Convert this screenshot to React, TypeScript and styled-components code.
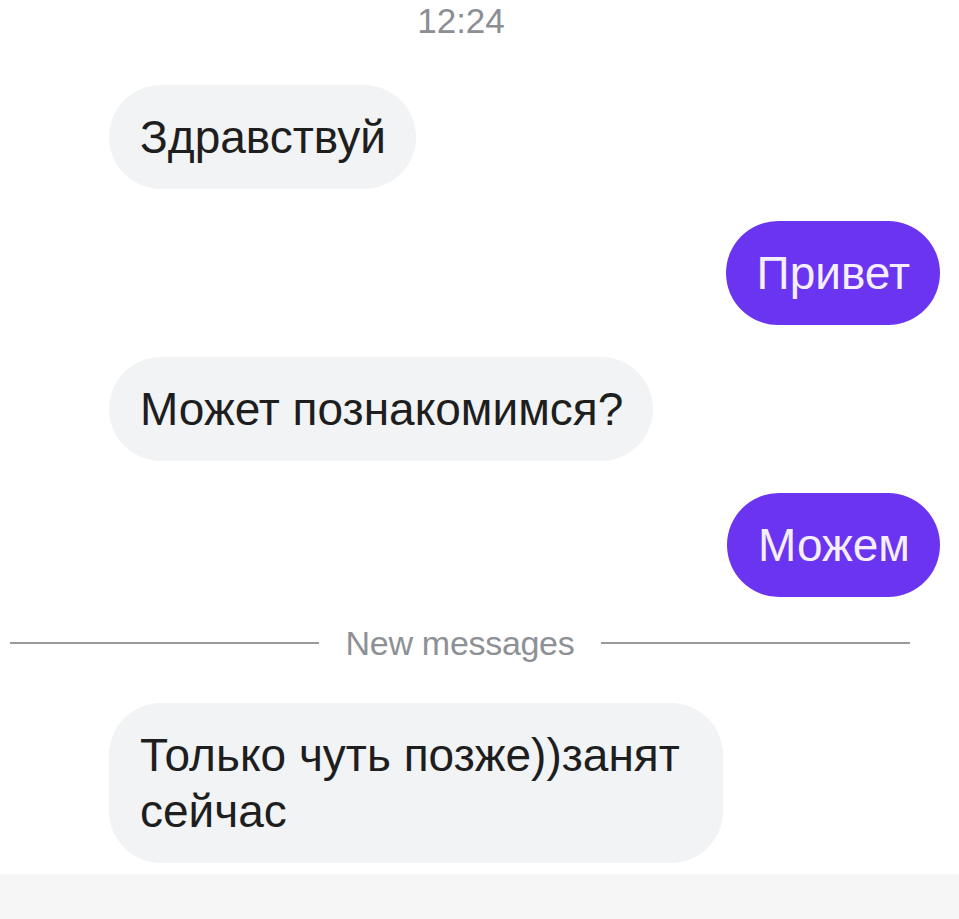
import React from 'react'
import styled, {createGlobalStyle} from 'styled-components'

const GlobalStyle = createGlobalStyle`
  html, body {
    margin: 0;
    padding: 0;
    background: #ffffff;
  }
  body {
    font-family: "Liberation Sans", Arial, sans-serif;
  }
`

const Screen = styled.div`
  width: 959px;
  display: flex;
  flex-direction: column;
`

const Time = styled.div`
  text-align: center;
  font-size: 35px;
  line-height: 40px;
  padding: 1px 37px 0 0;
  color: #8b8e92;
  margin-bottom: 44px;
`

const Row = styled.div<{$out?: boolean}>`
  display: flex;
  justify-content: ${p => (p.$out ? 'flex-end' : 'flex-start')};
  padding: ${p => (p.$out ? '0 19px 0 0' : '0 0 0 109px')};
  margin-bottom: 32px;
`

const Bubble = styled.div<{$out?: boolean}>`
  max-width: 614px;
  box-sizing: border-box;
  padding: 24px 30px 24px 31px;
  font-size: 46px;
  line-height: 56px;
  border-radius: 52px;
  background: ${p => (p.$out ? '#6b34f0' : '#f1f3f5')};
  color: ${p => (p.$out ? '#f4eeff' : '#1e1e1e')};
`

const Divider = styled.div`
  display: flex;
  align-items: center;
  gap: 27px;
  margin: -6px 49px 40px 10px;
  height: 40px;
`

const Line = styled.div`
  flex: 1;
  height: 2px;
  background: #9a9a9a;
`

const DividerText = styled.span`
  font-size: 34px;
  color: #8d9196;
  letter-spacing: -0.3px;
`

const Footer = styled.div`
  margin-top: -21px;
  height: 46px;
  background: #f6f6f6;
`

type Msg = {text: string; out?: boolean}

const before: Msg[] = [
  {text: 'Здравствуй'},
  {text: 'Привет', out: true},
  {text: 'Может познакомимся?'},
  {text: 'Можем', out: true},
]

const after: Msg[] = [{text: 'Только чуть позже))занят сейчас'}]

const Message = ({msg}: {msg: Msg}) => (
  <Row $out={msg.out}>
    <Bubble $out={msg.out}>{msg.text}</Bubble>
  </Row>
)

export default function App() {
  return (
    <Screen>
      <GlobalStyle />
      <Time>12:24</Time>
      {before.map((m, i) => (
        <Message key={i} msg={m} />
      ))}
      <Divider>
        <Line />
        <DividerText>New messages</DividerText>
        <Line />
      </Divider>
      {after.map((m, i) => (
        <Message key={i} msg={m} />
      ))}
      <Footer />
    </Screen>
  )
}
